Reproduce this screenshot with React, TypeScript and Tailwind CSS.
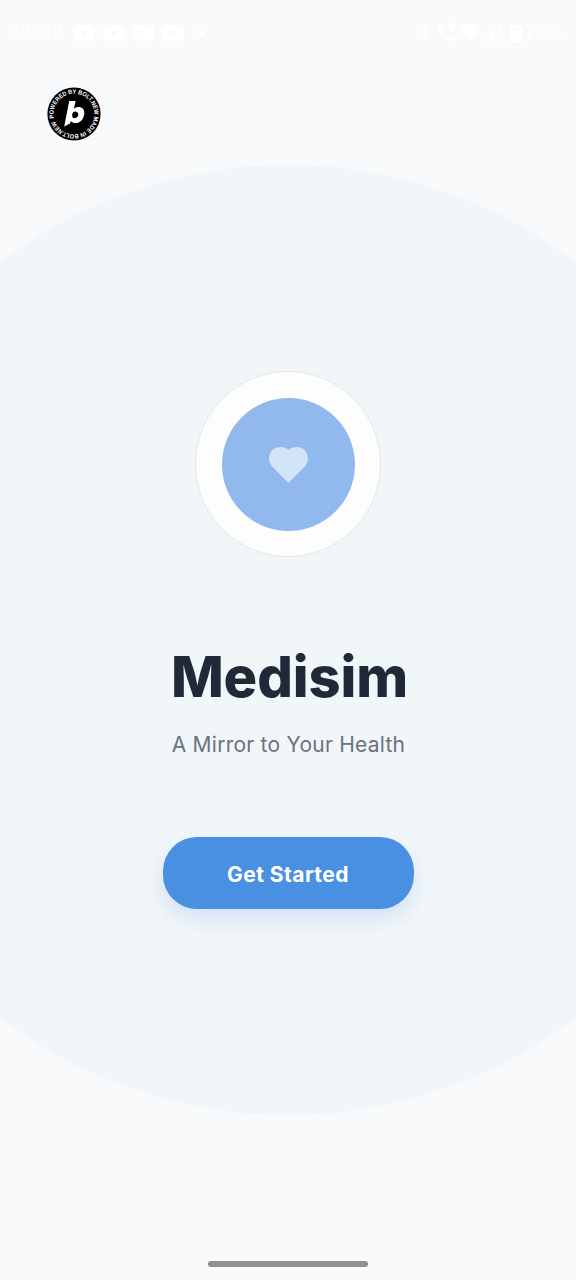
import React from 'react';
import { MdBluetooth } from 'react-icons/md';

function VideoIcon() {
  return (
    <svg viewBox="0 0 22 16" className="h-4 w-[22px]">
      <path
        fill="#fff"
        fillRule="evenodd"
        d="M4 0.5h14a4 4 0 0 1 4 4v7a4 4 0 0 1-4 4H4a4 4 0 0 1-4-4v-7a4 4 0 0 1 4-4zM9 5v6l5-3z"
      />
    </svg>
  );
}

function StatusBar() {
  return (
    <header className="flex h-[65px] items-center justify-between pl-3.5 pr-3.5 text-white">
      <div className="flex items-center">
        <span className="w-[59px] whitespace-nowrap font-['Roboto',sans-serif] text-[19.5px] leading-none">00:37</span>
        <div className="flex items-center gap-[7.5px]">
          <VideoIcon />
          <VideoIcon />
          <VideoIcon />
          <VideoIcon />
        </div>
        <span className="ml-[14px] size-1.5 rounded-full bg-white" />
      </div>
      <div className="flex items-center">
        <MdBluetooth className="size-[19px]" />
        <svg viewBox="0 0 20 20" className="ml-[3px] size-5" fill="#fff">
          <path d="M3 1.5L6.5 1.5 7.5 6 5 8.2C6.3 11 8.6 13.3 11.6 14.8L14 12.4 18 13.4V17.2C18 18 17.5 18.5 16.7 18.5 8.4 18.5 1.5 11.5 1.5 3.2 1.5 2.2 2 1.5 3 1.5zM9.5 1.5Q14-1 19 1.5L14.2 8.5z" />
        </svg>
        <svg viewBox="0 0 22 17" className="ml-0.5 h-[17px] w-[22px]" fill="#fff">
          <path d="M0 4Q11-4 22 4L11 17z" />
        </svg>
        <svg viewBox="0 0 18 17" className="ml-1 h-[17px] w-[18px]">
          <path d="M1 16L13 4v12z" fill="none" stroke="#fff" strokeWidth="1.5" />
          <path d="M6 11.5L10 7.5V16H6z" fill="#fff" />
          <path d="M16 1v10M16 14v2" fill="none" stroke="#fff" strokeWidth="1.8" />
        </svg>
        <svg viewBox="0 0 12 18" className="ml-[7px] h-[18px] w-3">
          <path
            fill="#fff"
            fillRule="evenodd"
            d="M3.5 0h5v2H10a2 2 0 0 1 2 2v12a2 2 0 0 1-2 2H2a2 2 0 0 1-2-2V4a2 2 0 0 1 2-2h1.5zM2 4v2h8V4z"
          />
        </svg>
        <span className="ml-[3px] font-['Roboto',sans-serif] text-[20px] leading-none">77%</span>
      </div>
    </header>
  );
}

function BoltBadge() {
  return (
    <svg viewBox="-27 -27 54 54" className="ml-[46.5px] mt-[21.5px] size-[54px] shrink-0">
      <defs>
        <path id="badge-ring" d="M-19.9 4.2A20.3 20.3 0 0 1 19.9-4.2A20.3 20.3 0 0 1-19.9 4.2" />
      </defs>
      <circle r="26.6" fill="#000" />
      <text fill="#fff" className="font-['Liberation_Sans',sans-serif] text-[6.2px] font-bold">
        <textPath href="#badge-ring" textLength="124" lengthAdjust="spacingAndGlyphs">
          POWERED BY BOLT.NEW MADE IN BOLT.NEW
        </textPath>
      </text>
      <path
        fill="#fff"
        fillRule="evenodd"
        d="M-4.8-13H1.6L-.1-5.2C1.2-6.5 2.8-7.1 4.7-7.1 8.2-7.1 10.3-4.9 10.3-1.3 10.3 4.3 6.7 9.1 1.6 9.1-.5 9.1-2.1 8.4-3.1 7L-4 9.4-9.8 12.6zM1.3-2.5C-.5-2.5-1.9-.9-1.9 1.3-1.9 2.9-1 4-.5 4 2.5 4.7 4.3 2.7 4.3.3 4.3-1.4 3-2.5 1.3-2.5z"
      />
    </svg>
  );
}

export default function App() {
  return (
    <div className="relative isolate flex h-[1280px] w-full flex-col overflow-hidden bg-[#f8fafc]">
      <div className="absolute left-1/2 top-[165px] -z-10 size-[950px] -translate-x-1/2 rounded-full bg-[#f1f6f9]" />
      <StatusBar />
      <BoltBadge />
      <main className="mt-[230.5px] flex flex-col items-center">
        <div className="flex size-[186px] items-center justify-center rounded-full border border-[#e2e8f0] bg-[#fdfdfe]">
          <div className="flex size-[133px] items-center justify-center rounded-full bg-[#91b9ed]">
            <svg viewBox="0 0 40 37" className="h-[37px] w-10 translate-x-[0.5px] translate-y-[0.5px]" fill="#d3e3f8">
              <path d="M20 3.4C15.7-.4 8.2-.5 3.8 3.8c-4.5 4.5-4.3 11.7-.1 16.1L20 36.6l16.3-16.7c4.2-4.4 4.4-11.6-.1-16.1C31.8-.5 24.3-.4 20 3.4z" />
            </svg>
          </div>
        </div>
        <h1 className="mt-[85px] whitespace-nowrap pl-[3px] font-['Inter',sans-serif] text-[56px] font-extrabold leading-[70px] tracking-[-0.1px] text-[#1f2937]">
          Medisim
        </h1>
        <p className="mt-[18px] whitespace-nowrap pl-px font-['Inter',sans-serif] text-[21px] leading-[30px] tracking-[0.25px] text-[#6b7280]">
          A Mirror to Your Health
        </p>
        <button className="mt-[77px] h-[72px] w-[251px] rounded-[34px] bg-[#4a90e2] pt-0.5 font-['Inter',sans-serif] text-[21px] font-bold leading-none tracking-[0.45px] text-white shadow-[0_10px_20px_rgba(74,144,226,0.18)]">
          Get Started
        </button>
      </main>
      <div className="mx-auto mb-[13px] mt-auto h-1.5 w-40 rounded-full bg-[#909090]" />
    </div>
  );
}
